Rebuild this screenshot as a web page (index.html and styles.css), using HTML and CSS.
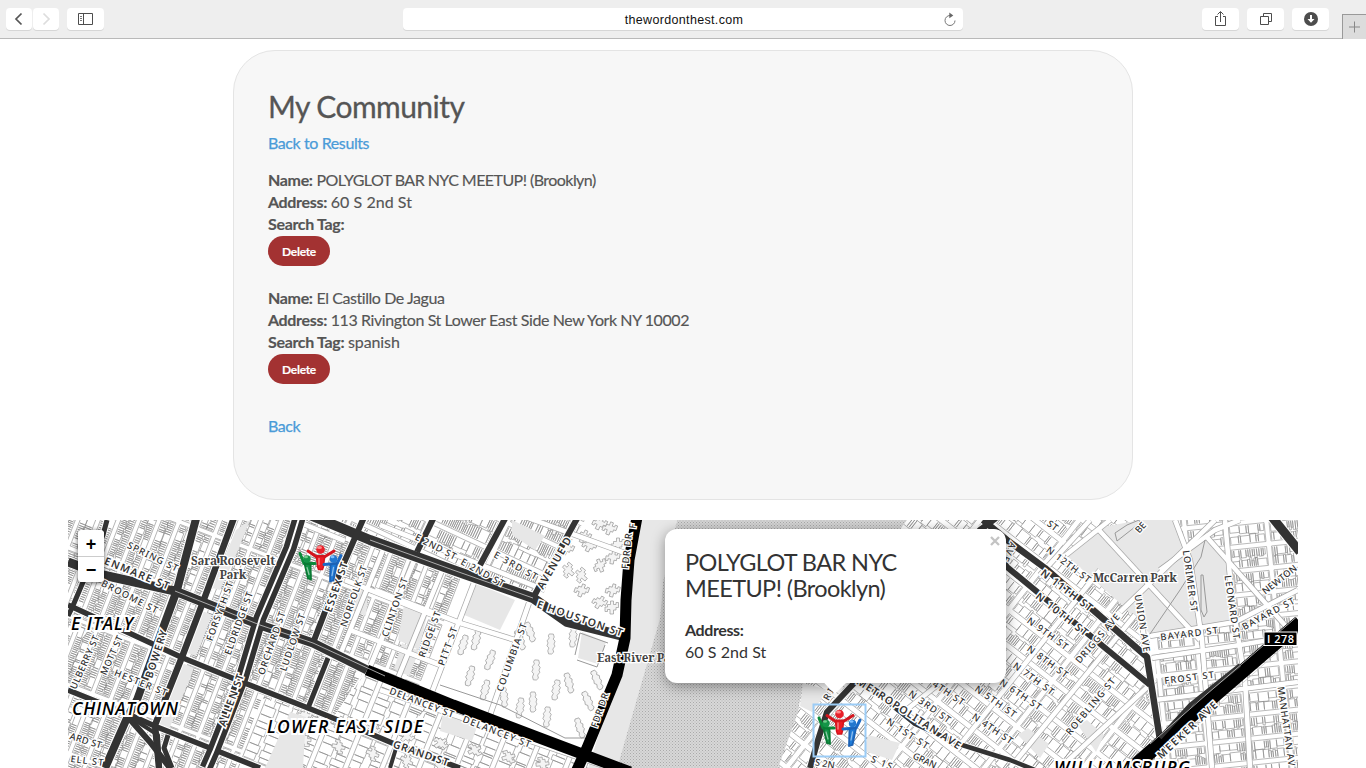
FILE: index.html
```html
<!DOCTYPE html>
<html lang="en">
<head>
<meta charset="utf-8">
<title>My Community</title>
<link rel="stylesheet" href="styles.css">
</head>
<body>
<header class="toolbar">
  <div class="tool-group nav">
    <button class="tool small"><svg width="26" height="22"><path d="M15.500 5.500 10 11l5.500 5.500" fill="none" stroke="#555" stroke-width="1.700"/></svg></button>
    <button class="tool small"><svg width="26" height="22"><path d="M10.500 5.500 16 11l-5.500 5.500" fill="none" stroke="#ddd" stroke-width="1.700"/></svg></button>
  </div>
  <button class="tool side"><svg width="37" height="22"><path d="M11.500 5.500h14v11h-14zM16.500 5.500v11" fill="none" stroke="#4d4d4d"/><path d="M13 8.500h2M13 10.500h2M13 12.500h2" stroke="#777"/></svg></button>
  <div class="address"><span>thewordonthest.com</span>
    <svg class="reload" width="14" height="16"><path d="M7 3.500A5 5 0 1 0 12 8.500" fill="none" stroke="#777"/><path d="M6.300.5v5.800l4-2.900z" fill="#666"/></svg></div>
  <div class="tool-group actions">
    <button class="tool"><svg width="37" height="22"><path d="M16 8.500h-2.500v9h10v-9H21M18.500 14V4M15.500 6.500l3-3 3 3" fill="none" stroke="#4d4d4d"/></svg></button>
    <button class="tool"><svg width="37" height="22"><path d="M13.500 8.500h8v8h-8zM16.500 8V5.500h8v8H22" fill="none" stroke="#4d4d4d"/></svg></button>
    <button class="tool"><svg width="37" height="22"><circle cx="19" cy="11" r="7" fill="#4d4d4d"/><path d="M18 7h2v4h2.500L19 14.800 15.500 11H18z" fill="#fff"/></svg></button>
  </div>
  <button class="new-tab"><svg width="23" height="24"><path d="M6 12h11M11.500 6.500v11" stroke="#888"/></svg></button>
</header>
<main>
  <section class="card">
    <h1>My Community</h1>
    <a class="link" href="#">Back to Results</a>
    <div class="entry first">
      <p><b>Name:</b> <span class="caps">POLYGLOT BAR NYC MEETUP! (Brooklyn)</span></p>
      <p><b>Address:</b> <span class="num">60 S 2nd St</span></p>
      <p><b>Search Tag:</b></p>
      <button class="delete">Delete</button>
    </div>
    <div class="entry">
      <p><b>Name:</b> <span class="place">El Castillo De Jagua</span></p>
      <p><b>Address:</b> <span class="long">113 Rivington St Lower East Side New York NY 10002</span></p>
      <p><b>Search Tag:</b> <span class="tag">spanish</span></p>
      <button class="delete">Delete</button>
    </div>
    <a class="link back" href="#">Back</a>
  </section>
  <section class="map">
    <svg class="tiles" viewBox="68 520 1230 248" width="1230" height="248">
      <defs>
        <pattern id="dots" width="3" height="3" patternUnits="userSpaceOnUse"><rect width="3" height="3" fill="#d8d8d8"/><rect width="1" height="1" fill="#aaa"/><rect x="1.500" y="1.500" width="1" height="1" fill="#b4b4b4"/></pattern>
        <clipPath id="les"><path d="M68 520H317L475 580 432 694 366 668 330 722 262 698 235 768H68z"/></clipPath>
        <clipPath id="village"><path d="M317 520H585L535 598z"/></clipPath>
        <clipPath id="burg"><path d="M803 683 900 520H1150V660L1160 740 1130 768H778z"/></clipPath>
        <clipPath id="east"><path d="M1147 520H1298V768H1130L1160 740z"/></clipPath>
        <clipPath id="south"><path d="M330 722 366 672 600 768H235L262 698z"/></clipPath>
        <g id="people">
          <g stroke-linecap="round" stroke-linejoin="round" fill="none">
            <path d="M-12-13.500-4-8H5L14-13.500" stroke="#d4161e" stroke-width="3"/><path d="M-3.500-8H4.500L3.500 2 2.500 5H-1.500L-2.500 2z" fill="#ee1c25" stroke="#d4141c" stroke-width="1.500"/>
            <path d="M-20-11-16-1-5-1" stroke="#0b8a3a" stroke-width="3"/><path d="M-15.500-1-9.500 0-9 15-12 14z" fill="#129447" stroke="#0b7a35" stroke-width="1.800"/>
            <path d="M21-9 17-1 4 0" stroke="#1c6ac5" stroke-width="3"/><path d="M17-1 10.500 0 10 17 13.500 16z" fill="#1e7bd8" stroke="#1c62b5" stroke-width="1.800"/>
            <path d="M-13 3-11 10M13.500 3 12 11M-1-6V0" stroke="#fff" opacity=".5" stroke-width="1.300"/>
          </g>
          <circle cx=".5" cy="-15" r="4.300" fill="#e8202a"/><circle cx="-13" cy="-5.500" r="3.700" fill="#159448"/><circle cx="13.500" cy="-5.500" r="3.700" fill="#2277cf"/>
          <ellipse cx="-.5" cy="-17" rx="2.500" ry="1.500" fill="#ff8a8a"/><ellipse cx="-14" cy="-7.500" rx="2" ry="1.200" fill="#72cc8b"/><ellipse cx="12.500" cy="-7.500" rx="2" ry="1.200" fill="#7fc0ff"/>
        </g>
      </defs>
      <path d="M68 520H1298V768H68z" fill="#fff"/>
      <g id="blocks" fill="none" stroke="#aaa" stroke-width=".7"></g>
      <g class="parks">
        <path d="M236 530 250 520 236 555 220 590 212 588zM200 610 212 615 196 656 185 652zM182 663 194 668 168 732 158 726zM476 583 515 600 500 630 462 614zM404 605 427 615 419 650 398 640zM402 643 419 651 409 676 394 669zM290 712 306 717 303 768H265zM443 713 477 727 472 741 440 731zM512 520 545 536 535 550 512 535zM582 632 606 642 598 664 578 658zM360 585 369 580 366 616 353 610z"/>
        <path d="M637 520H677L663 582 660 618 617 768H588L618 675 627 638z"/>
        <path d="M1066 555 1098 528 1140 520H1175L1185 545 1205 537 1232 565V622L1150 634 1122 605zM1018 735 1028 728 1049 744 1040 758zM1078 725 1087 720 1104 735 1096 752zM868 735 900 743 892 760 864 751zM803 683 828 690 812 712 800 706z"/>
      </g>
      <path d="M677 520H907L870 570 803 683 798 712 778 768H617L660 618 663 582z" fill="url(#dots)"/>
      <g id="minor"></g>
      <g id="major"></g>
      <g id="labels" text-anchor="middle"></g>
      <rect x="1264" y="632" width="33" height="13.500" stroke="#fff"/>
      <text x="1280.500" y="643" class="shield" textLength="27">I 278</text>
      <use href="#people" x="320" y="564.500"/>
      <use href="#people" x="839" y="729"/>
      <rect x="813.500" y="704.500" width="52" height="52" fill="none" stroke="#9bccf6" stroke-width="2"/>
    </svg>
    <div class="zoom"><button>+</button><button>−</button></div>
    <aside class="popup">
      <h2>POLYGLOT BAR NYC<br>MEETUP! (Brooklyn)</h2>
      <p><b>Address:</b></p>
      <p class="num">60 S 2nd St</p>
      <svg class="close" width="10" height="10"><path d="M1 1l8 8M9 1 1 9" stroke="#c3c3c3" stroke-width="2.300"/></svg>
    </aside>
  </section>
</main>
<script src="map.js"></script>
</body>
</html>
```
FILE: styles.css
```css
* { box-sizing: border-box; }
body { margin: 0; height: 768px; overflow: hidden; background: #fff; color: #555; font: 16px/22px Lato, "Open Sans", sans-serif; }
button { border: 0; padding: 0; margin: 0; font: inherit; }
p, h1, h2 { margin: 0; }
.toolbar { height: 39px; display: flex; align-items: flex-start; background: #eee; border-bottom: 1px solid #b9b9b9; padding: 8px 0 0 6px; }
.tool-group { display: flex; }
.nav { gap: 1px; }
.actions { gap: 8px; margin-left: 239px; }
.tool { width: 37px; height: 22px; background: #fff; border-radius: 4px; box-shadow: 0 1px 0 #d6d6d6; }
.tool.small { width: 26px; }
.tool svg { display: block; }
.side { margin-left: 8px; }
.address { width: 560px; height: 22px; margin-left: 299px; background: #fff; border-radius: 4px; box-shadow: 0 1px 0 #d6d6d6; display: grid; grid-template-columns: 1fr 20px; align-items: center; color: #111; font: 12.500px/22px "Liberation Sans", Arial, sans-serif; letter-spacing: .33px; text-align: center; }
.address span { padding: 1px 0 0 22px; }
.new-tab { width: 24px; height: 25px; margin: 6px 0 0 auto; background: #dcdcdc; border: solid #999; border-width: 1px 0 0 1px; }
.new-tab svg { display: block; }
.card { width: 900px; height: 450px; margin: 11px auto 20px; padding: 35px 34px; background: #f7f7f7; border: 1px solid #e4e4e4; border-radius: 42px; }
h1 { font-size: 30px; line-height: 40px; font-weight: 400; letter-spacing: -.55px; -webkit-text-stroke: .3px #555; }
.link { display: block; color: #4a9bd8; text-decoration: none; margin-top: 6px; letter-spacing: -.4px; -webkit-text-stroke: .25px; }
.entry { height: 118px; letter-spacing: -.33px; -webkit-text-stroke: .15px; }
.entry b, .popup b { font-weight: 700; }
.caps { letter-spacing: -.55px; }
.num { letter-spacing: .05px; }
.place { letter-spacing: -.43px; }
.long { letter-spacing: -.42px; }
.tag { letter-spacing: -.1px; }
.first { margin-top: 15px; }
.delete { display: block; width: 62px; height: 30px; margin-top: 1px; border-radius: 15px; background: #a33232; color: #fff; font: 700 12px/31px Lato, sans-serif; letter-spacing: -.3px; }
.back { margin-top: 10px; }
.map { position: relative; width: 1230px; height: 248px; margin: 0 auto; overflow: hidden; }
.tiles { display: block; }
.parks { fill: #e7e7e7; }
.name { font: 500 9.400px "Noto Sans", "Open Sans", sans-serif; fill: #333; stroke: #fff; stroke-width: 2.500px; paint-order: stroke; }
.name.road { font-size: 10.500px; font-weight: 600; stroke-width: 3px; }
.name.park { font: 700 12px "Noto Serif", "DejaVu Serif", serif; fill: #444; }
.name.area { font: italic 600 17.500px "Open Sans", sans-serif; fill: #000; stroke-width: 4px; }
.shield { font: 600 11px "Open Sans", sans-serif; fill: #fff; text-anchor: middle; }
.zoom { position: absolute; left: 10px; top: 10px; width: 26px; height: 52px; border-radius: 4px; background: #fff; box-shadow: 0 1px 5px rgba(0,0,0,.65); overflow: hidden; display: flex; flex-direction: column; }
.zoom button { height: 26px; background: #fff; color: #000; font: bold 18px/28px "Liberation Sans", sans-serif; }
.zoom button + button { border-top: 1px solid #ccc; line-height: 26px; }
.popup { position: absolute; left: 597px; top: 9px; width: 341px; height: 154px; padding: 20px 20px; border-radius: 12px; background: #fff; color: #333; box-shadow: 0 3px 14px rgba(0,0,0,.4); letter-spacing: -.4px; }
.popup::after { content: ""; position: absolute; left: 159px; top: 154px; border: solid transparent; border-width: 11px 11px 0; border-top-color: #fff; }
.popup h2 { font-size: 23.500px; line-height: 26px; font-weight: 400; letter-spacing: -.6px; margin-bottom: 18px; }
.close { position: absolute; right: 6px; top: 7px; }
```
FILE: map.js
```javascript
const NS = 'http://www.w3.org/2000/svg';
const layer = id => document.getElementById(id);
function add(parent, tag, attrs, text) {
  const el = document.createElementNS(NS, tag);
  for (const k in attrs) el.setAttribute(k, attrs[k]);
  if (text) el.textContent = text;
  parent.appendChild(el);
  return el;
}
let seed = 7;
const rnd = () => (seed = (seed * 16807) % 2147483647) / 2147483647;

// City blocks: rotated grid cells with two rows of narrow lots each.
function district(clip, cx, cy, angle, w, h, gap, density) {
  const outer = add(layer('blocks'), 'g', { 'clip-path': `url(#${clip})` });
  const g = add(outer, 'g', { transform: `translate(${cx} ${cy}) rotate(${angle})` });
  let edges = '', lots = '';
  const tall = h > w;
  for (let x = -14 * w; x < 14 * w; x += w) for (let y = -12 * h; y < 12 * h; y += h) {
    const bw = w - gap, bh = h - gap;
    edges += `M${x} ${y}h${bw}v${bh}h${-bw}z`;
    const len = tall ? bh : bw, depth = (tall ? bw : bh) / 2;
    for (let side = 0; side < 2; side++) {
      let p = 1;
      while (p < len - 2) {
        const lot = rnd() < density ? 1.8 + rnd() * .7 : 5 + rnd() * 6;
        const e = Math.min(lot, len - p - 1), d = depth * (.6 + rnd() * .35);
        if (tall) {
          const sx = side ? x + bw - 1 : x + 1, dir = side ? -d : d;
          lots += `M${sx} ${y + p}h${dir.toFixed(1)}v${e.toFixed(1)}h${(-dir).toFixed(1)}`;
        } else {
          const sy = side ? y + bh - 1 : y + 1, dir = side ? -d : d;
          lots += `M${(x + p).toFixed(1)} ${sy}v${dir.toFixed(1)}h${e.toFixed(1)}v${(-dir).toFixed(1)}`;
        }
        p += e;
      }
    }
  }
  add(g, 'path', { d: edges, stroke: '#a0a0a0' });
  add(g, 'path', { d: lots, stroke: '#828282', 'stroke-width': .55 });
}
district('les', 175, 591, 21, 19, 64, 4.5, .9);
district('village', 417, 552, 25, 72, 31, 5, .78);
district('burg', 1045, 568, 38, 78, 29, 5.5, .6);
district('east', 1200, 650, -6, 41, 24, 5, .65);
district('south', 330, 722, 22, 34, 70, 5, .1);

// Tower-in-the-park housing: notched slabs and crosses.
function tower(x, y, a, long) {
  const d = long
    ? 'M-2-10h4l1 3-1 2 2 2-1 3 1 2-2 3 1 3-2 2h-3l-1-3 1-3-2-2 1-3-1-2 2-3-1-2z'
    : 'M-1.500-6h3v3.500h2.500v-2h2.500v5h-2.500v2.500h-2.500v4h-3.500v-4.500h-2.500v2h-2.500v-4.500h2.500v-2.500h3z';
  add(layer('blocks'), 'path', { d, transform: `translate(${x} ${y}) rotate(${a})`, fill: '#f4f4f4', stroke: '#999' });
}
[[551,644,2],[573,637,4],[530,632,-20],[536,670,4],[504,697,-5],[547,717,5],[520,708,8],[569,683,-15],[588,701,-25],[597,680,-25],[533,702,0],[580,728,-18],[476,640,15],[470,676,15],[485,690,15],[556,690,10],[520,640,-20],[463,645,18],[490,660,20]]
  .forEach(([x, y, a]) => tower(x, y, a, true));
[[584,536,25],[600,523,25],[567,548,25],[590,545,25],[600,565,-20],[582,590,20],[581,575,-50],[600,602,30],[613,590,15],[612,607,0],[556,528,20],[618,544,0],[613,557,10],[568,570,-50],[610,528,20]]
  .forEach(([x, y, a]) => tower(x, y, a, false));
for (let i = 0; i < 16; i++) tower(305 + (i % 8) * 34, 715 + (i % 8) * 7 + (i > 7 ? 25 : 0), 20 + i * 9, false);

// Minor streets: grey casing with a white carriageway.
const minor = [
  'M385 545 340 655','M416 556 370 667','M443 568 398 678','M475 580 432 692','M530 600 490 715',
  'M345 580 440 618','M350 630 440 665','M375 590 460 623 515 640','M380 690 610 768',
  'M345 541 240 498','M380 525 545 590','M520 515 625 553',
  'M1175 520 1190 560 1202 640 1212 768','M1225 520 1232 600 1245 680 1250 768','M1140 600 1146 660',
  'M1150 636 1235 622 1298 590','M1152 658 1240 645 1298 635','M1155 700 1298 682',
  'M1120 612 1215 520','M1066 555 1110 520','M1040 575 1090 520','M1098 529 1200 640','M1205 535 1298 640',
  'M1010 768 1135 615','M960 745 1100 570','M1060 768 1155 680','M900 715 940 683','M1160 570 1215 530 1240 520'
];
minor.forEach(d => add(layer('minor'), 'path', { d, fill: 'none', stroke: '#a6a6a6', 'stroke-width': 6 }));
minor.forEach(d => add(layer('minor'), 'path', { d, fill: 'none', stroke: '#fff', 'stroke-width': 4.6 }));
['M1205 540 1201 557 1180 590 1150 634','M1201 575 1203 575 1207 612 1204 617 1201 610z','M1115 533 1127 525 1139 520 1140 523 1117 541z','M440 685 500 705 565 738 585 738','M575 655 580 633 608 643M577 660 597 667 605 645']
  .forEach(d => add(layer('minor'), 'path', { d, fill: 'none', stroke: '#999' }));

const roads = [
  ['M68 562 103 575 175 591 260 625 313 643 367 670',9],['M197 515 177 590 163 628 137 700 127 718 105 768',8],
  ['M235 515 203 602 182 657 155 725 159 768',6.5],['M300 515 290 548 260 618 242 678 213 752 206 768',13],
  ['M68 605 127 632 183 658 242 682 308 708 333 718 397 745 460 768',5.5],['M68 690 130 715 157 727 210 748 260 768',5.5],
  ['M107 520 103 535 72 608 68 616',5],['M127 716 150 742 170 768',6],['M130 717 158 735 160 768',4],['M168 735 164 748 172 768',5],
  ['M310 515 370 540 453 570 533 598 567 622 627 637',10],['M365 515 343 565 313 643',6],['M328 658 308 708',5],
  ['M435 515 417 552',6],['M507 515 480 565',6],['M579 515 533 598',6],['M397 745 390 768',4],
  ['M857 680 827 712 818 740 810 768',6],['M863 682 915 724 962 745 1010 760 1040 772',4.5],
  ['M983 520 1007 540 1045 568 1147 657 1160 740',6.5],['M996 518 980 530 1007 567 1150 685',6],['M1268 512 1300 552',9]
];
const black = [['M367 670 453 705 537 737 630 772',11],['M638 512 629 560 626 600 625 638 617 675 587 748 576 772',11],['M1130 770 1207 702 1300 622',14]];
const major = layer('major');
roads.forEach(([d, w]) => add(major, 'path', { d, fill: 'none', stroke: '#fff', 'stroke-width': w + 2 }));
roads.forEach(([d, w]) => add(major, 'path', { d, fill: 'none', stroke: '#333', 'stroke-width': w, 'stroke-linejoin': 'round' }));
black.forEach(([d, w]) => add(major, 'path', { d, fill: 'none', stroke: '#000', 'stroke-width': w, 'stroke-linejoin': 'round' }));
add(major, 'path', { d: 'M1160 738 1190 705 1240 665', fill: 'none', stroke: '#333', 'stroke-width': 4 });
add(major, 'path', { d: roads[3][0], fill: 'none', stroke: '#fff', 'stroke-width': 2 });
add(major, 'path', { d: 'M175 591 260 625 313 643 385 676M370 540 453 570 533 598M1150 744 1207 694 1300 614M1170 744 1217 706 1300 632', fill: 'none', stroke: '#ccc', 'stroke-width': .8 });

// text, centre x, centre y, angle, length, kind
const labels = [
  ['SPRING ST',153,556,26,55],['ENMARE ST',137,573,22,69,'road'],['BROOME ST',130,596,27,62],['MOTT ST',111,655,-66,42],
  ['ULBERRY ST',84,662,-66,58],['HESTER ST',141,682,22,56],['BOWERY',156,654,-72,50,'road'],['FORSYTH ST',219,611,-70,62],
  ['ELDRIDGE ST',238,623,-70,66],['ORCHARD ST',271,643,-71,66],['LUDLOW ST',292,642,-71,60],['ALLEN ST',231,700,-70,55,'road'],
  ['ESSEX ST',336,587,-71,52,'road'],['NORFOLK ST',353,596,-71,64],['ARD ST',86,740,17,33],['ELL ST',87,760,7,33],
  ['E 2ND ST',436,546,27,45],['E 2ND ST',483,572,29,48],['E 3RD ST',516,565,29,48],['AVENUE D',554,563,-60,58,'road'],
  ['FDR DR',626,551,-84,36],['F',632,526,-82,6],['E HOUSTON ST',580,618,19,90,'road'],['CLINTON ST',394,607,-71,62],
  ['RIDGE ST',429,634,-70,48],['PITT ST',447,646,-70,40],['COLUMBIA ST',511,657,-70,72],['DELANCEY ST',422,702,21,68],
  ['DELANCEY ST',497,731,21,72],['GRAND ST',421,753,19,58,'road'],['FDR DR',599,710,-71,36],
  ['RI',828,694,-60,12],['METROPOLITAN AVE',909,713,33,122,'road'],['N 3RD ST',930,706,35,49],['N 1ST ST',908,733,33,48],
  ['N 4TH ST',944,689,34,48],['N 5TH ST',996,701,35,48],['N 4TH ST',993,728,34,47],['GRAN',925,760,25,25],['S 1S',882,762,22,22],['S 2N',825,763,10,20],
  ['N 12TH ST',1069,564,37,53],['N 11TH ST',1067,590,37,62,'road'],['N 10TH ST',1062,614,38,63,'road'],['N 9TH ST',1048,633,36,48],
  ['N 8TH ST',1048,661,36,48],['N 7TH ST',1034,678,36,48],['N 6TH ST',1021,694,34,48],['DRIGGS AVE',1097,638,-49,62],
  ['ROEBLING ST',1090,706,-50,71],['LORIMER ST',1191,581,82,62],['LEONARD ST',1233,607,82,64],['UNION AVE',1143,623,81,58],
  ['BAYARD ST',1189,633,-7,58],['BAYARD ST',1268,613,-28,58],['NEWTON',1279,579,-38,41],['FROST ST',1189,677,-7,50],
  ['MEEKER AVE',1187,730,-43,78,'road'],['MANHATTAN AV',1287,726,82,80],['ST',1053,525,37,11],['BE',1140,527,-48,11],['AVE',1010,552,115,20],
  ['Sara Roosevelt',233,561,0,84,'park'],['Park',233,575,0,27,'park'],['East River Pa',634,658,0,74,'park'],['McCarren Park',1135,578,0,84,'park'],
  ['E ITALY',102,623,0,62,'area'],['CHINATOWN',125,708,0,106,'area'],['LOWER EAST SIDE',345,726,0,156,'area'],['WILLIAMSBURG',1122,767,0,136,'area']
];
labels.forEach(([t, x, y, a, len, kind]) => add(layer('labels'), 'text', {
  class: 'name ' + (kind || ''), textLength: len, transform: `translate(${x} ${y}) rotate(${a})`, y: kind === 'area' ? 6.5 : 4
}, t));
```
